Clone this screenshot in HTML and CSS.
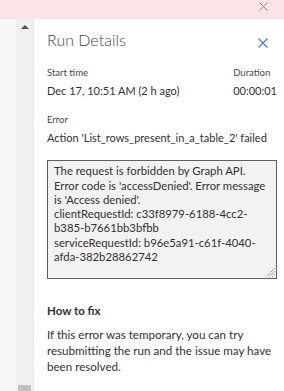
FILE: index.html
```html
<!DOCTYPE html>
<html>
<head>
<meta charset="utf-8">
<link rel="stylesheet" href="styles.css">
</head>
<body>
<div class="topbar">
  <svg class="top-close" width="9" height="9" viewBox="0 0 9 9"><path d="M0.5 0.5L8.5 8.5M8.5 0.5L0.5 8.5" stroke="#8c8c8c" stroke-width="1" fill="none"/></svg>
</div>
<div class="main">
  <div class="gutter"></div>
  <div class="scrollbar">
    <div class="arrow"></div>
    <div class="thumb"></div>
  </div>
  <div class="panel">
    <div class="header">
      <h1 class="title">Run Details</h1>
      <svg class="close" width="10" height="10" viewBox="0 0 10 10"><path d="M0.5 0.5L9.5 9.5M9.5 0.5L0.5 9.5" stroke="#3a73e8" stroke-width="1.1" fill="none"/></svg>
    </div>
    <div class="row">
      <div class="col">
        <div class="label">Start time</div>
        <div class="value">Dec 17, 10:51 AM (2 h ago)</div>
      </div>
      <div class="col">
        <div class="label">Duration</div>
        <div class="value">00:00:01</div>
      </div>
    </div>
    <div class="label err-label">Error</div>
    <div class="value">Action 'List_rows_present_in_a_table_2' failed</div>
    <div class="errbox">
      <div class="errtext">
        <span class="ln">The request is forbidden by Graph API.</span>
        <span class="ln">Error code is 'accessDenied'. Error message</span>
        <span class="ln">is 'Access denied'.</span>
        <span class="ln">clientRequestId: c33f8979-6188-4cc2-</span>
        <span class="ln">b385-b7661bb3bfbb</span>
        <span class="ln">serviceRequestId: b96e5a91-c61f-4040-</span>
        <span class="ln">afda-382b28862742</span>
      </div>
      <svg class="grip" width="9" height="9" viewBox="0 0 9 9"><path d="M8.5 0.5L0.5 8.5M8.5 3.5L3.5 8.5M8.5 6.5L6.5 8.5" stroke="#5a5a5a" stroke-width="1" stroke-dasharray="1 1" fill="none"/></svg>
    </div>
    <h2 class="fix-title">How to fix</h2>
    <p class="fix-text">If this error was temporary, you can try resubmitting the run and the issue may have been resolved.</p>
  </div>
</div>
</body>
</html>
```
FILE: styles.css
```css
html, body {
  margin: 0;
  padding: 0;
}
body {
  width: 284px;
  height: 391px;
  overflow: hidden;
  font-family: Lato, "Open Sans", sans-serif;
  color: #323130;
  background: #fff;
}
.topbar {
  height: 19px;
  background: #fbe4e6;
  display: flex;
  justify-content: flex-end;
  align-items: flex-start;
}
.top-close {
  margin: 2px 16px 0 0;
}
.main {
  display: flex;
  height: 372px;
}
.gutter {
  width: 16px;
  background: #f8f8f8;
}
.scrollbar {
  width: 17px;
  background: #f0f0f0;
  border-right: 1px solid #e6e6e6;
  display: flex;
  flex-direction: column;
  justify-content: space-between;
  align-items: center;
}
.arrow {
  margin-top: 6px;
  width: 0;
  height: 0;
  border-left: 4px solid transparent;
  border-right: 4px solid transparent;
  border-bottom: 4px solid #505050;
}
.thumb {
  width: 13px;
  height: 6px;
  background: #c2c2c2;
}
.panel {
  flex: 1;
  padding: 11px 7px 0 13px;
  min-width: 0;
}
.header {
  display: flex;
  justify-content: space-between;
  align-items: flex-start;
  height: 20px;
}
.title {
  margin: 0;
  font-size: 16px;
  line-height: 20px;
  font-weight: 300;
  color: #484644;
}
.close {
  margin: 8px 9px 0 0;
}
.row {
  display: flex;
  justify-content: space-between;
  margin-top: 15.5px;
}
.label {
  font-size: 9.5px;
  color: #484644;
  line-height: 13px;
}
.value {
  font-size: 11px;
  line-height: 15px;
  margin-top: 4px;
  white-space: nowrap;
}
.err-label {
  margin-top: 15.8px;
}
.err-label + .value {
  margin-top: 3.4px;
}
.errbox {
  position: relative;
  margin-top: 15.3px;
  height: 119px;
  background: #f2f2f2;
  border: 1px solid #5f5f5f;
  padding: 3.5px 6px 0 6px;
  box-sizing: border-box;
}
.errtext {
  font-size: 11.3px;
  line-height: 14.2px;
}
.ln {
  display: block;
  white-space: nowrap;
}
.grip {
  position: absolute;
  right: 1px;
  bottom: 1px;
}
.fix-title {
  margin: 24.5px 0 0 0;
  font-size: 11.5px;
  font-weight: 700;
  line-height: 16px;
}
.fix-text {
  margin: 7.9px 0 0 0;
  font-size: 11.6px;
  line-height: 16px;
}
```
